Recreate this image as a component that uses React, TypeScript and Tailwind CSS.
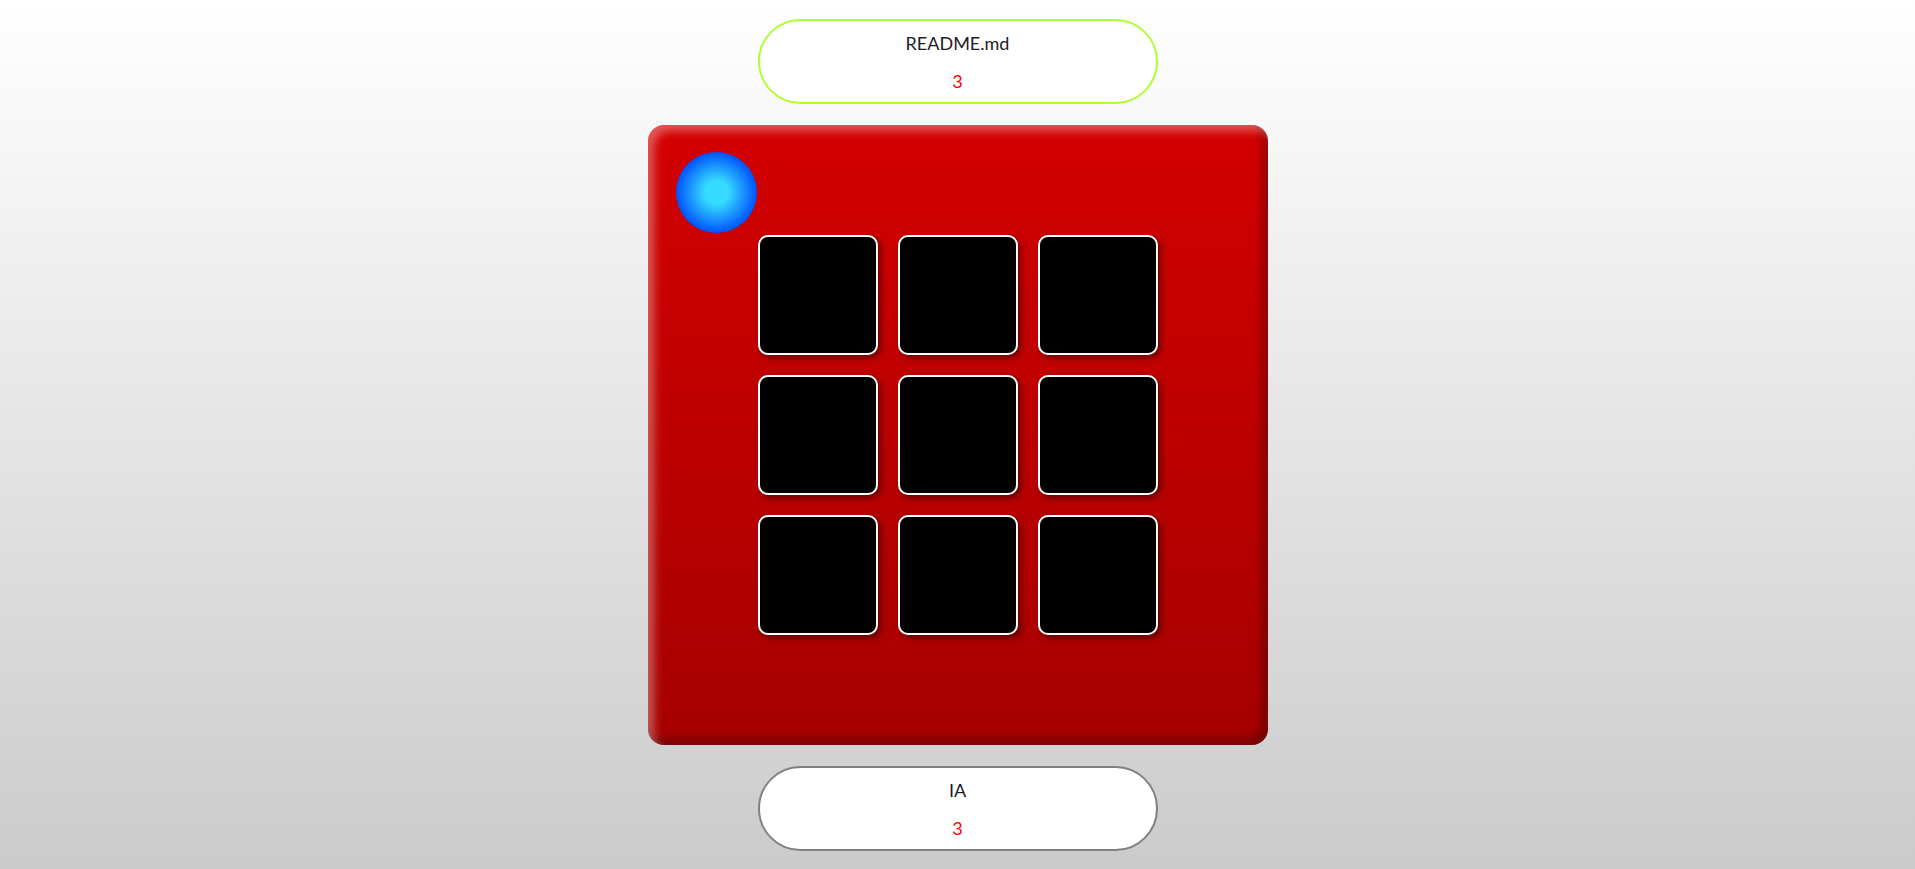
import React from "react";

function Pill({ title, count, border }: { title: string; count: string; border: string }) {
  return (
    <div
      className={`w-[400px] h-[85px] rounded-[43px] bg-white border-2 ${border} flex flex-col items-center pt-[10px]`}
      style={{ fontFamily: '"Lato", "DejaVu Sans", sans-serif' }}
    >
      <div className="h-[24px] leading-[24px] text-[18px] text-[#1c1c24]">{title}</div>
      <div className="h-[24px] leading-[24px] text-[18px] text-[#ff0000] mt-[14px]">{count}</div>
    </div>
  );
}

export default function App() {
  const cells = Array.from({ length: 9 });
  return (
    <div className="min-h-screen w-full bg-gradient-to-b from-[#ffffff] to-[#cbcbcb] flex flex-col items-center justify-center gap-[21px]">
      <Pill title="README.md" count="3" border="border-[#adff2f]" />
      <div className="relative w-[620px] h-[620px] rounded-[16px] bg-gradient-to-b from-[#d40000] to-[#a60000] shadow-[inset_6px_6px_10px_rgba(255,255,255,0.35),inset_-6px_-6px_10px_rgba(0,0,0,0.3)] p-[110px]">
        <div className="absolute left-[28px] top-[27px] w-[81px] h-[81px] rounded-full bg-[radial-gradient(circle_closest-side,#36dcff_0%,#36dcff_28%,#0052ff_100%)]" />
        <div className="grid grid-cols-3 gap-[20px]">
          {cells.map((_, i) => (
            <div
              key={i}
              className="w-[120px] h-[120px] rounded-[10px] bg-black border-2 border-white shadow-[3px_3px_6px_rgba(0,0,0,0.45)]"
            />
          ))}
        </div>
      </div>
      <Pill title="IA" count="3" border="border-[#808080]" />
    </div>
  );
}
